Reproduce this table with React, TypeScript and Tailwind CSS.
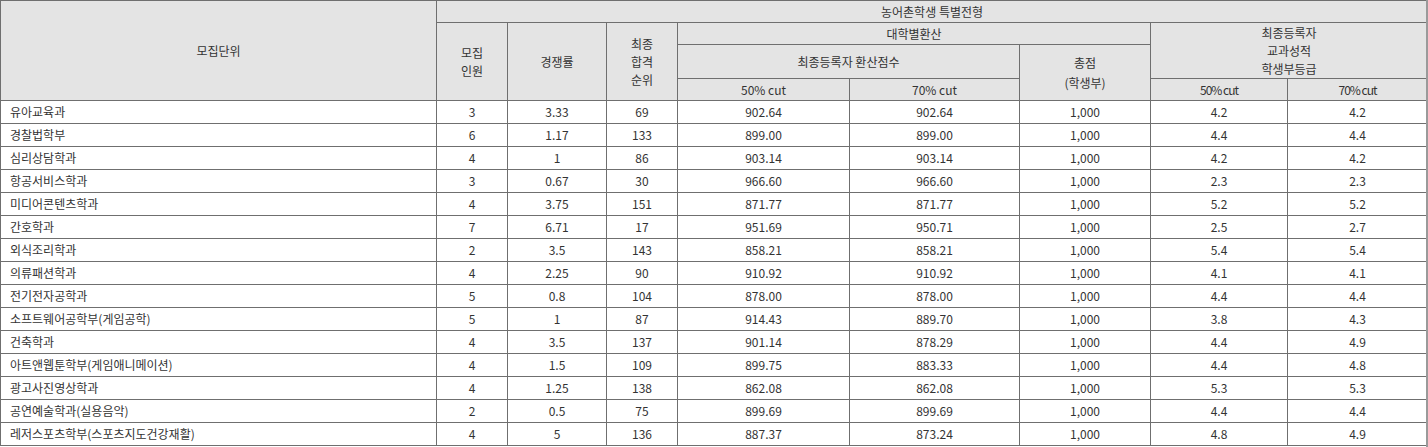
const rows = [
  ['유아교육과', '3', '3.33', '69', '902.64', '902.64', '1,000', '4.2', '4.2'],
  ['경찰법학부', '6', '1.17', '133', '899.00', '899.00', '1,000', '4.4', '4.4'],
  ['심리상담학과', '4', '1', '86', '903.14', '903.14', '1,000', '4.2', '4.2'],
  ['항공서비스학과', '3', '0.67', '30', '966.60', '966.60', '1,000', '2.3', '2.3'],
  ['미디어콘텐츠학과', '4', '3.75', '151', '871.77', '871.77', '1,000', '5.2', '5.2'],
  ['간호학과', '7', '6.71', '17', '951.69', '950.71', '1,000', '2.5', '2.7'],
  ['외식조리학과', '2', '3.5', '143', '858.21', '858.21', '1,000', '5.4', '5.4'],
  ['의류패션학과', '4', '2.25', '90', '910.92', '910.92', '1,000', '4.1', '4.1'],
  ['전기전자공학과', '5', '0.8', '104', '878.00', '878.00', '1,000', '4.4', '4.4'],
  ['소프트웨어공학부(게임공학)', '5', '1', '87', '914.43', '889.70', '1,000', '3.8', '4.3'],
  ['건축학과', '4', '3.5', '137', '901.14', '878.29', '1,000', '4.4', '4.9'],
  ['아트앤웹툰학부(게임애니메이션)', '4', '1.5', '109', '899.75', '883.33', '1,000', '4.4', '4.8'],
  ['광고사진영상학과', '4', '1.25', '138', '862.08', '862.08', '1,000', '5.3', '5.3'],
  ['공연예술학과(실용음악)', '2', '0.5', '75', '899.69', '899.69', '1,000', '4.4', '4.4'],
  ['레저스포츠학부(스포츠지도건강재활)', '4', '5', '136', '887.37', '873.24', '1,000', '4.8', '4.9'],
];

const th = 'border border-[#6f6f6f] bg-[#e4e4e4] font-normal text-center align-middle p-0 leading-[18px]';
const td = 'border border-[#6f6f6f] text-center align-middle p-0';

export default function App() {
  return (
    <div className="bg-white w-[1428px] h-[447px] overflow-hidden border-r-2 border-[#9a9a9a]">
      <table
        className="table-fixed border-collapse w-[1427px] text-[12px] text-[#333]"
        style={{ fontFamily: '"Noto Sans CJK KR", "Noto Sans", sans-serif' }}
      >
        <colgroup>
          <col className="w-[436px]" />
          <col className="w-[71px]" />
          <col className="w-[99px]" />
          <col className="w-[71px]" />
          <col className="w-[172px]" />
          <col className="w-[170px]" />
          <col className="w-[131px]" />
          <col className="w-[137px]" />
          <col className="w-[140px]" />
        </colgroup>
        <thead>
          <tr className="h-[22px]">
            <th rowSpan={4} className={th}>모집단위</th>
            <th colSpan={8} className={th}>농어촌학생 특별전형</th>
          </tr>
          <tr className="h-[22px]">
            <th rowSpan={3} className={th}>모집<br />인원</th>
            <th rowSpan={3} className={th}>경쟁률</th>
            <th rowSpan={3} className={th}>최종<br />합격<br />순위</th>
            <th colSpan={3} className={th}>대학별환산</th>
            <th colSpan={2} rowSpan={2} className={th}>최종등록자<br />교과성적<br />학생부등급</th>
          </tr>
          <tr className="h-[34px]">
            <th colSpan={2} className={th}>최종등록자 환산점수</th>
            <th rowSpan={2} className={`${th} leading-[20px]`}>총점<br />(학생부)</th>
          </tr>
          <tr className="h-[22px]">
            <th className={th}>50% cut</th>
            <th className={th}>70% cut</th>
            <th className={`${th} tracking-[-1px]`}>50% cut</th>
            <th className={`${th} tracking-[-1px]`}>70% cut</th>
          </tr>
        </thead>
        <tbody>
          {rows.map((r) => (
            <tr key={r[0]} className="h-[23px]">
              <td className={`${td} text-left pl-[9px]`}>{r[0]}</td>
              {r.slice(1).map((v, i) => (
                <td key={i} className={td}>{v}</td>
              ))}
            </tr>
          ))}
        </tbody>
      </table>
    </div>
  );
}
